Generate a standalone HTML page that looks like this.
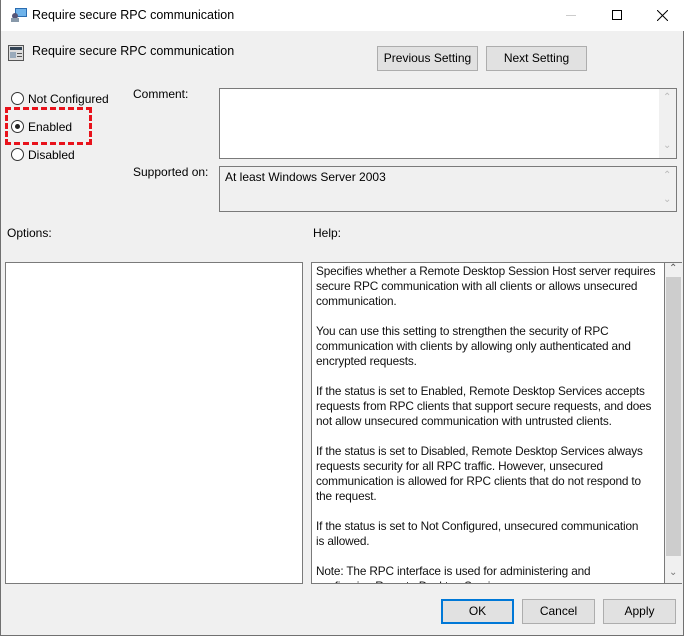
<!DOCTYPE html>
<html><head><style>
*{margin:0;padding:0;box-sizing:border-box}
body{width:686px;height:636px;background:#fff;font-family:"Liberation Sans",sans-serif;font-size:12px;color:#000;position:relative;overflow:hidden}
.win{position:absolute;left:0;top:0;width:684px;height:636px;background:#f0f0f0;border:1px solid #707070;border-top:none}
.title{position:absolute;left:0;top:0;width:684px;height:31px;background:#fff}
.abs{position:absolute}
.btn{position:absolute;background:#e1e1e1;border:1px solid #adadad;text-align:center;line-height:22px;font-size:12px}
.box{position:absolute;background:#fff;border:1px solid #7a7a7a}
.radio{position:absolute;width:13px;height:13px;border:1px solid #333;border-radius:50%;background:#fff}
.sb{position:absolute;color:#bbb;font-size:10px}
</style></head><body>
<div class="win">
<div class="title">
 <svg class="abs" style="left:9px;top:7px" width="18" height="16"><rect x="5" y="1" width="12" height="9" fill="#2b6cb0"/><rect x="6" y="2" width="10" height="7" fill="#6fb3ea"/><circle cx="5" cy="9" r="3" fill="#557"/><rect x="1" y="11" width="8" height="4" fill="#8899aa"/></svg>
 <div class="abs" style="left:31px;top:8px;font-size:12.5px">Require secure RPC communication</div>
 <div class="abs" style="left:565px;top:15px;width:10px;height:1px;background:#ccc"></div>
 <div class="abs" style="left:611px;top:10px;width:10px;height:10px;border:1px solid #000"></div>
 <svg class="abs" style="left:656px;top:10px" width="11" height="11"><path d="M0 0L11 11M11 0L0 11" stroke="#000" stroke-width="1"/></svg>
</div>
<svg class="abs" style="left:7px;top:45px" width="16" height="16"><rect x="0.5" y="0.5" width="15" height="15" fill="#ddd" stroke="#555"/><rect x="2" y="2" width="12" height="3" fill="#345"/><rect x="2" y="7" width="6" height="6" fill="#9ab"/><rect x="9" y="8" width="5" height="1" fill="#555"/><rect x="9" y="11" width="5" height="1" fill="#555"/></svg>
<div class="abs" style="left:31px;top:44px;font-size:12.5px">Require secure RPC communication</div>
<div class="btn" style="left:376px;top:46px;width:101px;height:25px">Previous Setting</div>
<div class="btn" style="left:485px;top:46px;width:101px;height:25px">Next Setting</div>

<div class="radio" style="left:10px;top:92px"></div><div class="abs" style="left:27px;top:92px">Not Configured</div>
<div class="radio" style="left:10px;top:120px"></div><div class="abs" style="left:14px;top:124px;width:5px;height:5px;border-radius:50%;background:#222"></div><div class="abs" style="left:27px;top:120px">Enabled</div>
<div class="radio" style="left:10px;top:148px"></div><div class="abs" style="left:27px;top:148px">Disabled</div>
<div class="abs" style="left:4px;top:107px;width:87px;height:38px;border:3px dashed #e8121b"></div>

<div class="abs" style="left:132px;top:87px">Comment:</div>
<div class="box" style="left:218px;top:88px;width:458px;height:71px"></div>
<div class="abs" style="left:658px;top:89px;width:17px;height:69px;background:#f0f0f0"></div>
<div class="sb" style="left:662px;top:92px">&#8963;</div><div class="sb" style="left:662px;top:140px">&#8964;</div>
<div class="abs" style="left:132px;top:165px">Supported on:</div>
<div class="box" style="left:218px;top:166px;width:458px;height:46px;background:#f0f0f0"></div>
<div class="abs" style="left:224px;top:170px">At least Windows Server 2003</div>
<div class="sb" style="left:662px;top:170px">&#8963;</div><div class="sb" style="left:662px;top:194px">&#8964;</div>

<div class="abs" style="left:6px;top:226px">Options:</div>
<div class="abs" style="left:312px;top:226px">Help:</div>
<div class="box" style="left:4px;top:262px;width:298px;height:322px"></div>
<div class="box" style="left:310px;top:262px;width:354px;height:322px;overflow:hidden;border-right:none">
<div style="padding:1px 0 0 4px;line-height:15px;color:#111;font-size:11.8px;letter-spacing:-0.15px;white-space:nowrap">Specifies whether a Remote Desktop Session Host server requires<br>secure RPC communication with all clients or allows unsecured<br>communication.<br><br>You can use this setting to strengthen the security of RPC<br>communication with clients by allowing only authenticated and<br>encrypted requests.<br><br>If the status is set to Enabled, Remote Desktop Services accepts<br>requests from RPC clients that support secure requests, and does<br>not allow unsecured communication with untrusted clients.<br><br>If the status is set to Disabled, Remote Desktop Services always<br>requests security for all RPC traffic. However, unsecured<br>communication is allowed for RPC clients that do not respond to<br>the request.<br><br>If the status is set to Not Configured, unsecured communication<br>is allowed.<br><br>Note: The RPC interface is used for administering and<br>configuring Remote Desktop Services.</div>
</div>
<div class="abs" style="left:664px;top:262px;width:17px;height:322px;background:#f0f0f0;border-top:1px solid #7a7a7a;border-bottom:1px solid #7a7a7a"></div>
<div class="abs" style="left:663px;top:262px;width:1px;height:322px;background:#7a7a7a"></div>
<div class="abs" style="left:665px;top:277px;width:15px;height:279px;background:#cdcdcd"></div>
<div class="sb" style="left:668px;top:263px;color:#555">&#8963;</div><div class="sb" style="left:668px;top:567px;color:#777">&#8964;</div>

<div class="btn" style="left:440px;top:599px;width:73px;height:25px;border:2px solid #0078d7;line-height:21px">OK</div>
<div class="btn" style="left:521px;top:599px;width:73px;height:25px">Cancel</div>
<div class="btn" style="left:602px;top:599px;width:73px;height:25px">Apply</div>
</div>
</body></html>
